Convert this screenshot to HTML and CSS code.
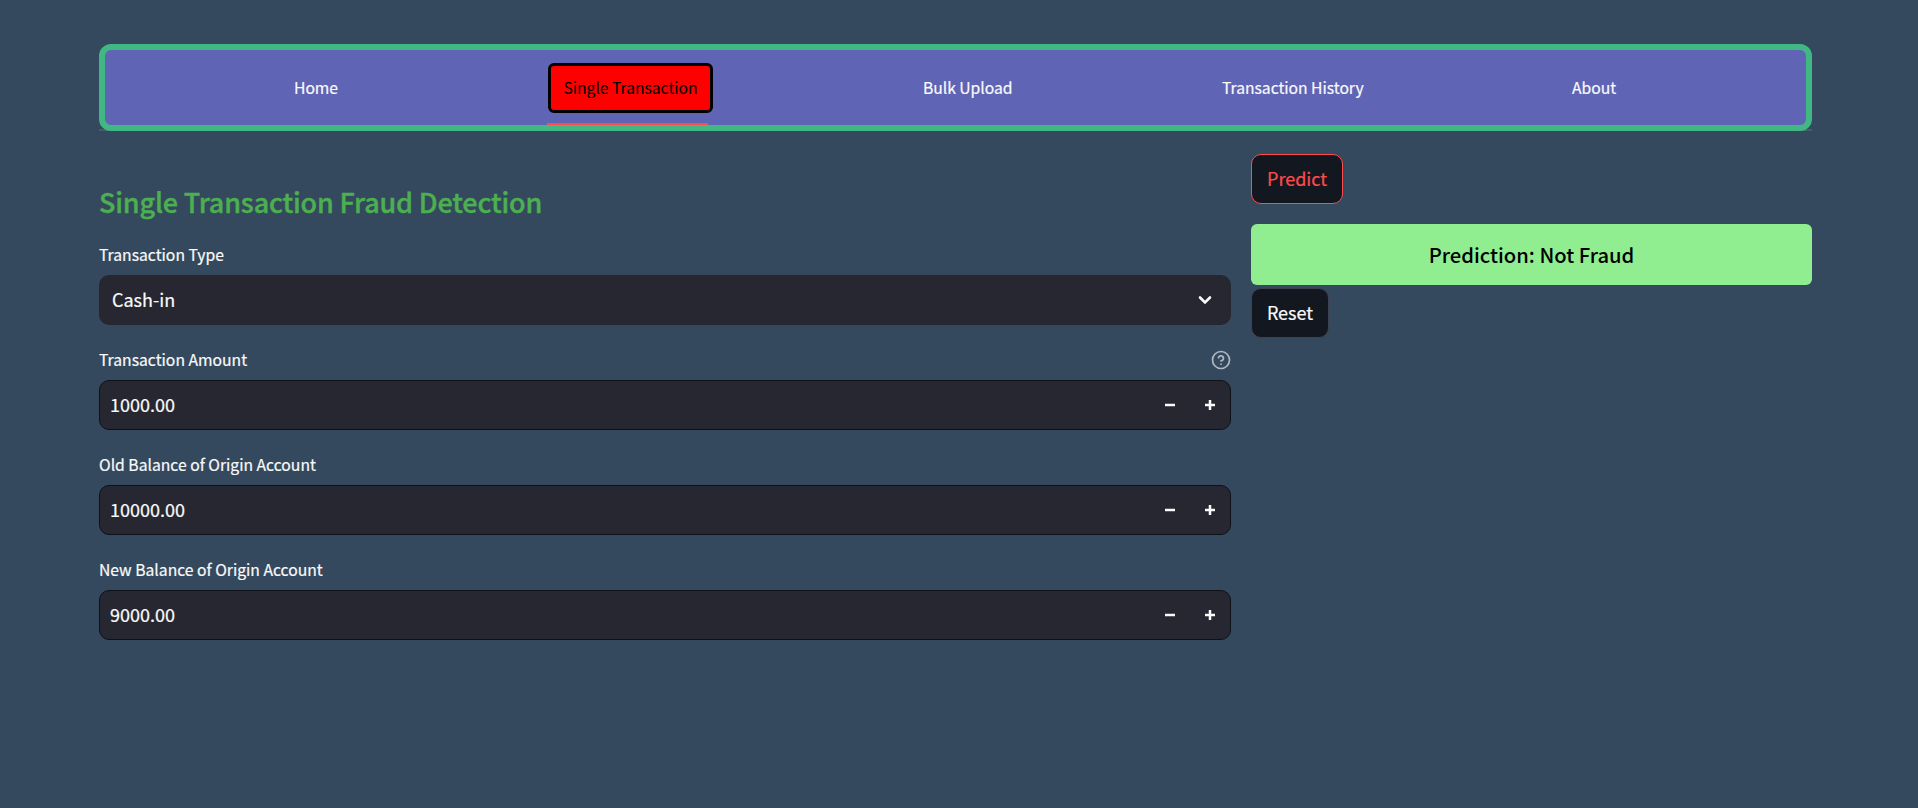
FILE: index.html
```html
<!DOCTYPE html>
<html lang="en">
<head>
<meta charset="utf-8">
<title>Single Transaction Fraud Detection</title>
<link rel="stylesheet" href="styles.css">
</head>
<body>
<main class="page">
  <div class="nav-wrap">
    <nav class="nav">
      <a class="tab">Home</a>
      <a class="tab tab-active">Single Transaction</a>
      <a class="tab">Bulk Upload</a>
      <a class="tab">Transaction History</a>
      <a class="tab">About</a>
      <span class="tab-highlight"></span>
    </nav>
  </div>
  <div class="columns">
    <section class="form">
      <h3 class="title">Single Transaction Fraud Detection</h3>
      <div class="field">
        <div class="label"><span>Transaction Type</span></div>
        <div class="box select"><span class="value">Cash-in</span>
          <svg class="chevron" width="14" height="10" viewBox="0 0 14 10"><path d="M2 2.5 L7 7.5 L12 2.5" fill="none" stroke="#fafafa" stroke-width="2.6" stroke-linecap="round" stroke-linejoin="miter"/></svg>
        </div>
      </div>
      <div class="field">
        <div class="label"><span>Transaction Amount</span>
          <svg class="help" width="20" height="20" viewBox="0 0 20 20" fill="none" stroke="#b1b8c1" stroke-width="1.7" stroke-linecap="round" stroke-linejoin="round"><circle cx="10" cy="10" r="8.5"/><path d="M7.5 7.6a2.55 2.55 0 0 1 4.95.85c0 1.7-2.5 2.4-2.5 2.4"/><path d="M10 14.2h.01"/></svg>
        </div>
        <div class="box number"><span class="value">1000.00</span>
          <svg class="step" width="10" height="10" viewBox="0 0 10 10"><path d="M0 5h10" stroke="#fafafa" stroke-width="2.5"/></svg>
          <svg class="step" width="10" height="10" viewBox="0 0 10 10"><path d="M0 5h10M5 0v10" stroke="#fafafa" stroke-width="2.5"/></svg>
        </div>
      </div>
      <div class="field">
        <div class="label"><span>Old Balance of Origin Account</span></div>
        <div class="box number"><span class="value">10000.00</span>
          <svg class="step" width="10" height="10" viewBox="0 0 10 10"><path d="M0 5h10" stroke="#fafafa" stroke-width="2.5"/></svg>
          <svg class="step" width="10" height="10" viewBox="0 0 10 10"><path d="M0 5h10M5 0v10" stroke="#fafafa" stroke-width="2.5"/></svg>
        </div>
      </div>
      <div class="field">
        <div class="label"><span>New Balance of Origin Account</span></div>
        <div class="box number"><span class="value">9000.00</span>
          <svg class="step" width="10" height="10" viewBox="0 0 10 10"><path d="M0 5h10" stroke="#fafafa" stroke-width="2.5"/></svg>
          <svg class="step" width="10" height="10" viewBox="0 0 10 10"><path d="M0 5h10M5 0v10" stroke="#fafafa" stroke-width="2.5"/></svg>
        </div>
      </div>
    </section>
    <aside class="result">
      <button class="btn btn-predict">Predict</button>
      <div class="banner">Prediction: Not Fraud</div>
      <button class="btn btn-reset">Reset</button>
    </aside>
  </div>
</main>
</body>
</html>
```
FILE: styles.css
```css
* { box-sizing: border-box; }
body {
  margin: 0;
  background: #34495e;
  color: #fafafa;
  font-family: "Noto Sans CJK JP", "Noto Sans CJK SC", "Noto Sans", sans-serif;
  font-size: 18px;
  -webkit-text-stroke: 0.2px;
}
.page { padding: 44px 106px 0 99px; }
.nav-wrap {
  height: 87px;
  background: linear-gradient(#485a6e, #485a6e) bottom / 100% 2px no-repeat;
}
.nav {
  position: relative;
  display: grid;
  grid-template-columns: 254px 375px 299px 350px 1fr;
  align-items: center;
  justify-items: start;
  height: 87px;
  padding-left: 189px;
  border: 6px solid #41b883;
  border-radius: 12px;
  background: #5f64b5;
  font-size: 15.7px;
  line-height: 24px;
  letter-spacing: -0.03px;
  white-space: nowrap;
}
.tab-active {
  width: 165px;
  height: 50px;
  border: 3px solid #000;
  border-radius: 6px;
  background: #f00;
  color: #000;
  line-height: 44px;
  text-align: center;
  -webkit-text-stroke: 0;
}
.tab-highlight {
  position: absolute;
  left: 442px;
  bottom: 0;
  width: 161px;
  height: 2px;
  background: #ff4b4b;
}
.columns {
  display: grid;
  grid-template-columns: 1132px 561px;
  gap: 20px;
}
.form { padding-top: 51px; }
.title {
  margin: 0 0 21px;
  color: #4caf50;
  font-size: 27px;
  font-weight: 500;
  line-height: 40px;
  letter-spacing: -0.18px;
  -webkit-text-stroke: 0.4px;
}
.field { margin-bottom: 23px; }
.label {
  display: flex;
  justify-content: space-between;
  align-items: center;
  height: 24px;
  margin-bottom: 8px;
  font-size: 15.7px;
  line-height: 24px;
}
.box {
  display: flex;
  align-items: center;
  height: 50px;
  border-radius: 10px;
  background: #262730;
}
.value { flex: 1; padding-bottom: 2px; }
.select { padding: 0 19px 0 13px; }
.number {
  gap: 30px;
  padding: 0 15px 0 10px;
  border: 1px solid #0e1117;
}
.result {
  display: flex;
  flex-direction: column;
  align-items: flex-start;
  padding-top: 23px;
}
.btn {
  height: 50px;
  padding: 0 0 2px;
  border: 1px solid;
  border-radius: 10px;
  background: #131720;
  font: inherit;
}
.btn-predict { width: 92px; color: #ff4b4b; border-color: #ff4b4b; }
.banner {
  width: 561px;
  height: 61px;
  margin: 20px 0 3px;
  border-radius: 6px;
  background: #90ee90;
  color: #000;
  font-size: 20.2px;
  font-weight: 500;
  line-height: 61px;
  text-align: center;
  -webkit-text-stroke: 0;
}
.btn-reset { width: 78px; color: #fafafa; border-color: #3c4250; }
```
